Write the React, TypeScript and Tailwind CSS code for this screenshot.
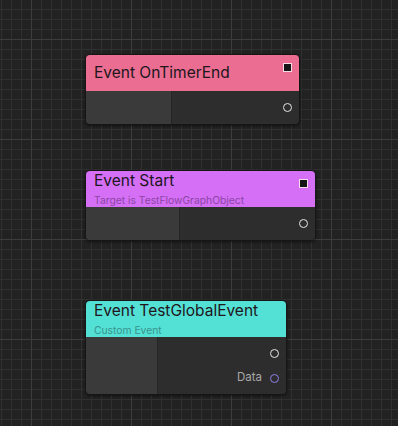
type Pin = { label?: string; ring: string };

type NodeProps = {
  title: string;
  subtitle?: string;
  header: string;
  subColor: string;
  top: string;
  width: string;
  leftWidth: string;
  bodyHeight: string;
  exec?: boolean;
  pins: Pin[];
};

function GraphNode({
  title,
  subtitle,
  header,
  subColor,
  top,
  width,
  leftWidth,
  bodyHeight,
  exec,
  pins,
}: NodeProps) {
  return (
    <div
      className={`absolute left-[85px] ${top} ${width} rounded-[5px] border border-[#161616] overflow-hidden shadow-[0_1px_3px_rgba(0,0,0,0.5)]`}
    >
      <div className={`relative h-[36px] ${header} px-2 flex flex-col ${subtitle ? "pt-[1px]" : "justify-center"}`}>
        <div className="text-[15.5px] leading-[18px] text-[#20161b]">
          {title}
        </div>
        {subtitle && (
          <div className={`mt-[4px] text-[10.3px] leading-[13px] ${subColor}`}>
            {subtitle}
          </div>
        )}
        {exec && (
          <div className="absolute right-[7px] top-[8px] w-[9px] h-[9px] bg-[#151515] border border-[#f4dde8]" />
        )}
      </div>
      <div className={`flex ${bodyHeight}`}>
        <div className={`${leftWidth} bg-[#3a3a3a] border-r border-[#262626]`} />
        <div className="flex-1 bg-[#2d2d2d] flex flex-col items-end pt-[11px] pr-[7px] gap-[15px]">
          {pins.map((p, i) => (
            <div key={i} className="flex items-center gap-[8px] h-[10px]">
              {p.label && (
                <span className="text-[11.5px] text-[#a9a9a9]">{p.label}</span>
              )}
              <span
                className={`block w-[9px] h-[9px] rounded-full border-[1.5px] ${p.ring}`}
              />
            </div>
          ))}
        </div>
      </div>
    </div>
  );
}

export default function App() {
  return (
    <div
      className="relative w-[398px] h-[426px] overflow-hidden bg-[#222222] [background-image:linear-gradient(#3d3d3d_1px,transparent_1px),linear-gradient(90deg,#3d3d3d_1px,transparent_1px),linear-gradient(#303030_1px,transparent_1px),linear-gradient(90deg,#303030_1px,transparent_1px)] [background-size:100px_100px,100px_100px,10px_10px,10px_10px] [background-position:31px_39px,31px_39px,1px_9px,1px_9px]"
      style={{ fontFamily: "Inter, 'Noto Sans', sans-serif" }}
    >
      <GraphNode
        title="Event OnTimerEnd"
        header="bg-[#eb6d91]"
        subColor=""
        top="top-[54px]"
        width="w-[215px]"
        leftWidth="w-[86px]"
        bodyHeight="h-[33px]"
        exec
        pins={[{ ring: "border-[#e6e6e6]" }]}
      />
      <GraphNode
        title="Event Start"
        subtitle="Target is TestFlowGraphObject"
        header="bg-[#d46ff6]"
        subColor="text-[#8c46a4]"
        top="top-[170px]"
        width="w-[231px]"
        leftWidth="w-[94px]"
        bodyHeight="h-[33px]"
        exec
        pins={[{ ring: "border-[#e6e6e6]" }]}
      />
      <GraphNode
        title="Event TestGlobalEvent"
        subtitle="Custom Event"
        header="bg-[#53e0d5]"
        subColor="text-[#3a948e]"
        top="top-[300px]"
        width="w-[202px]"
        leftWidth="w-[72px]"
        bodyHeight="h-[57px]"
        pins={[
          { ring: "border-[#e6e6e6]" },
          { label: "Data", ring: "border-[#8f80e8]" },
        ]}
      />
    </div>
  );
}
